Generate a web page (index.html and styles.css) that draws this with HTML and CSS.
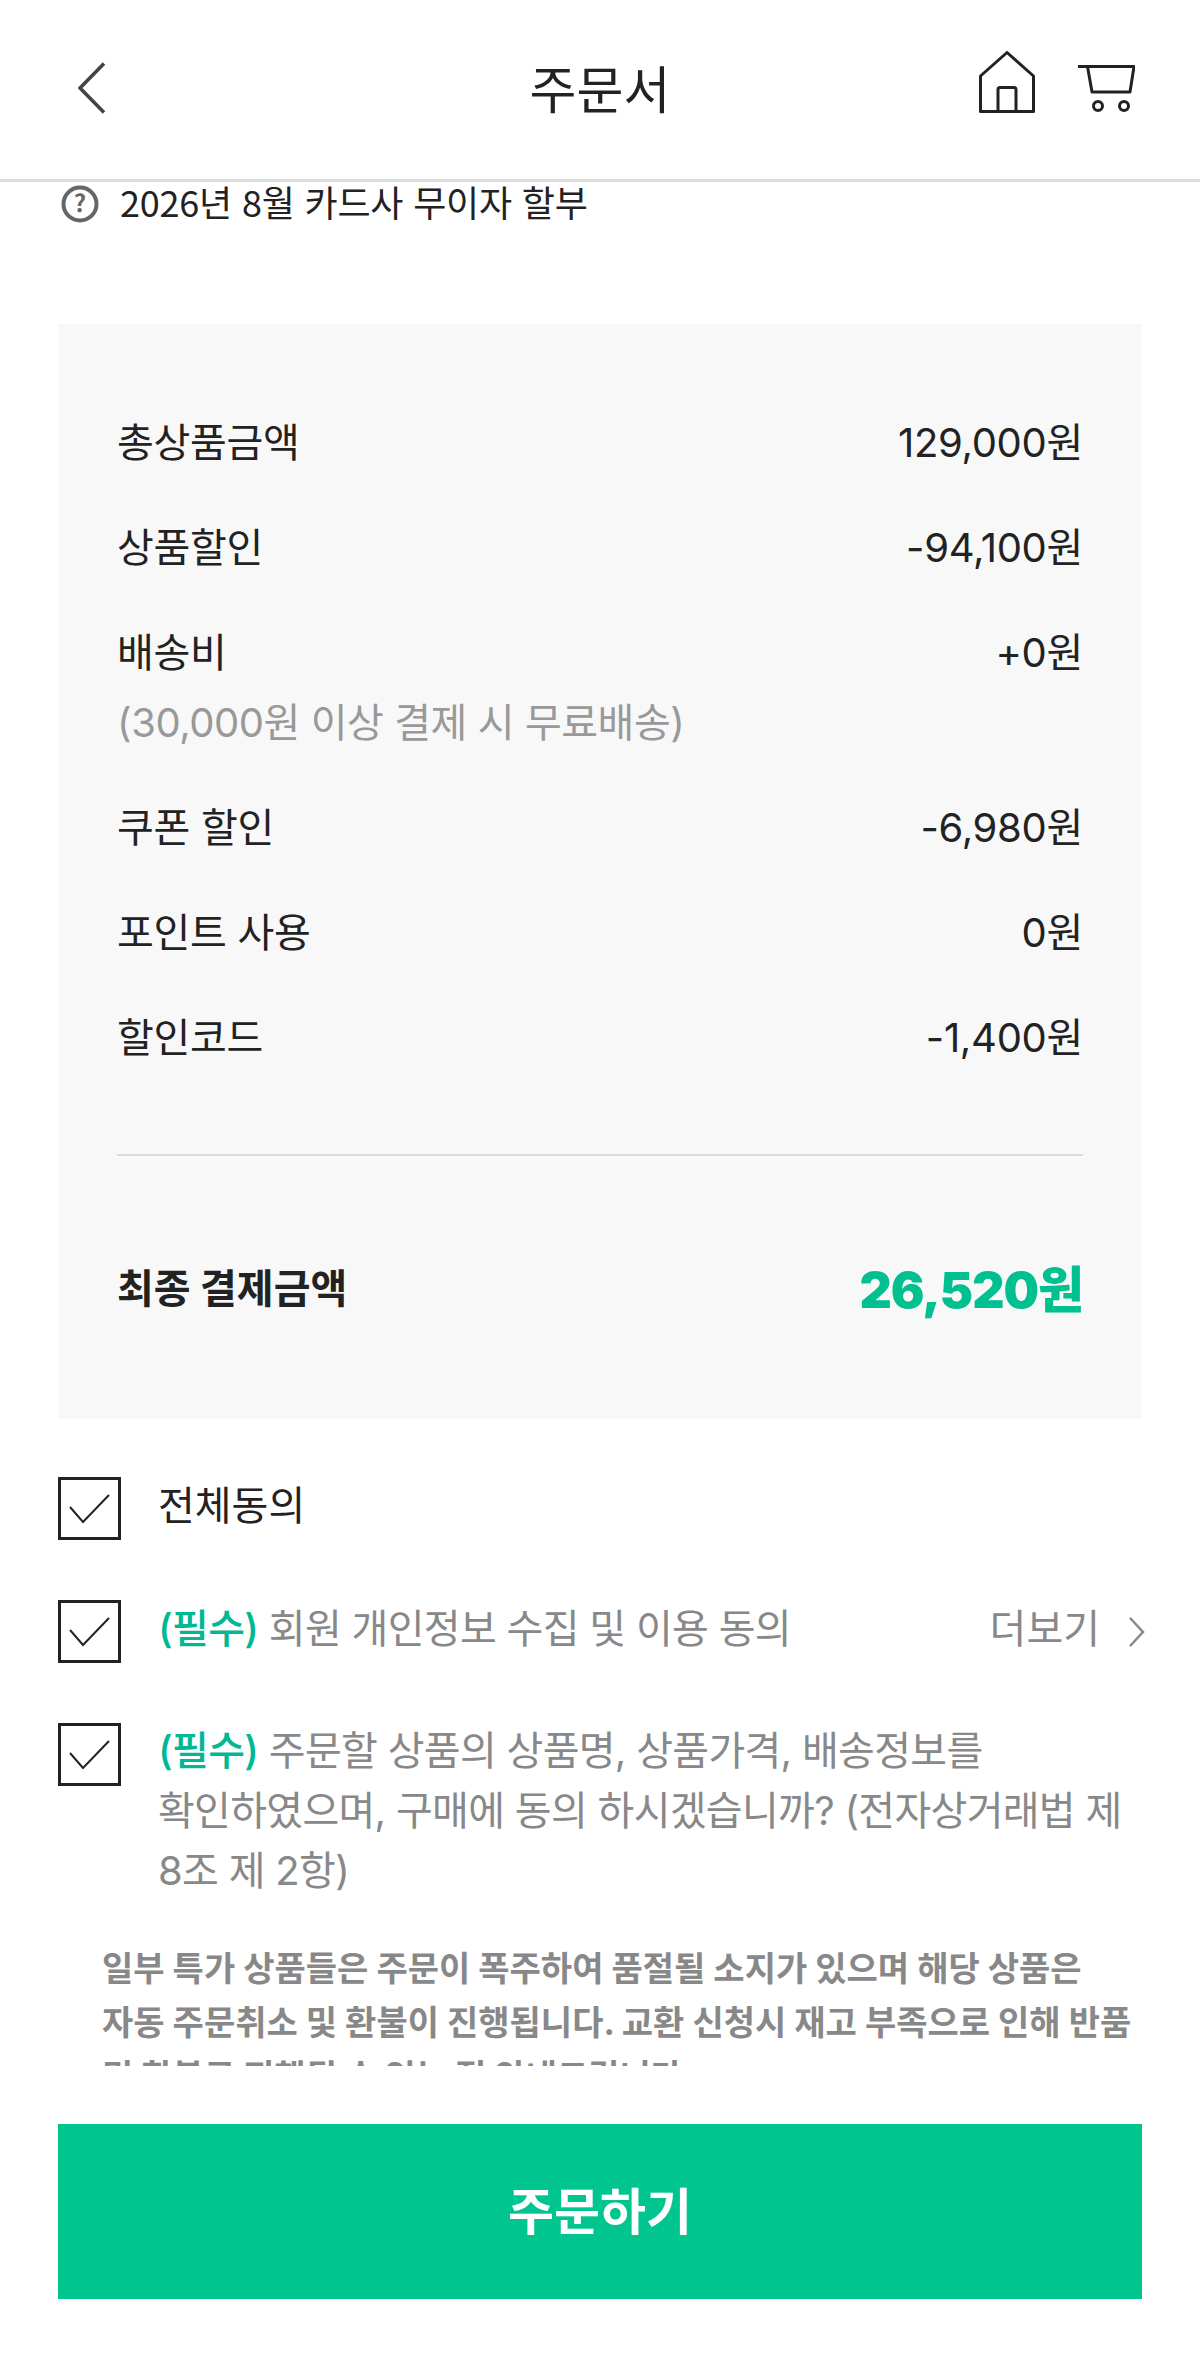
FILE: index.html
```html
<!DOCTYPE html>
<html lang="ko">
<head>
    <meta charset="UTF-8">
    <meta name="viewport" content="width=device-width, initial-scale=1.0">
    <title>주문서</title>
    <link rel="stylesheet" href="styles.css">
</head>
<body>
    <div class="page">
        <header class="header">
            <a class="back" href="#">
                <svg width="28" height="52" viewBox="0 0 28 52"><path d="M26 1.5 2 26l24 24.5" fill="none" stroke="#444" stroke-width="3.500"/></svg>
            </a>
            <h1 class="title">주문서</h1>
            <div class="header-icons">
                <svg width="56" height="62" viewBox="0 0 56 62"><path d="M1.5 60.5V25L28 1.5 54.5 25v35.5zM19 60.5V38.5q0-2 2-2h14q2 0 2 2v22" fill="none" stroke="#222" stroke-width="3" stroke-linejoin="round"/></svg>
                <svg width="57" height="49" viewBox="0 0 57 49"><path d="M0 2.5h56L52 28H14L9.500 2.500" fill="none" stroke="#222" stroke-width="3" stroke-linejoin="round"/><circle cx="20" cy="42" r="4.500" fill="none" stroke="#222" stroke-width="3"/><circle cx="46" cy="42" r="4.500" fill="none" stroke="#222" stroke-width="3"/></svg>
            </div>
        </header>

        <main class="content">
            <div class="info">
                <svg width="38" height="38" viewBox="0 0 38 38"><circle cx="19" cy="19" r="16.500" fill="none" stroke="#666" stroke-width="4"/><text x="19" y="27" text-anchor="middle" class="info-mark">?</text></svg>
                <span class="info-text">2026년 8월 카드사 무이자 할부</span>
            </div>

            <section class="summary">
                <div class="rows">
                    <div class="row"><span>총상품금액</span><span>129,000원</span></div>
                    <div class="row"><span>상품할인</span><span>-94,100원</span></div>
                    <div>
                        <div class="row"><span>배송비</span><span>+0원</span></div>
                        <p class="row-note">(30,000원 이상 결제 시 무료배송)</p>
                    </div>
                    <div class="row"><span>쿠폰 할인</span><span>-6,980원</span></div>
                    <div class="row"><span>포인트 사용</span><span>0원</span></div>
                    <div class="row"><span>할인코드</span><span>-1,400원</span></div>
                </div>
                <div class="total">
                    <span class="total-label">최종 결제금액</span>
                    <span class="total-price">26,520원</span>
                </div>
            </section>

            <section class="agree">
                <div class="agree-row">
                    <span class="check"><svg width="42" height="30" viewBox="0 0 42 30"><path d="M1 13l13 15L40 1" fill="none" stroke="#222" stroke-width="2"/></svg></span>
                    <span class="agree-all">전체동의</span>
                </div>
                <div class="agree-row">
                    <span class="check"><svg width="42" height="30" viewBox="0 0 42 30"><path d="M1 13l13 15L40 1" fill="none" stroke="#222" stroke-width="2"/></svg></span>
                    <span class="agree-text"><b>(필수)</b> 회원 개인정보 수집 및 이용 동의</span>
                    <a class="more" href="#"><span>더보기</span>
                        <svg width="18" height="30" viewBox="0 0 18 30"><path d="M2 1l13 14L2 29" fill="none" stroke="#888" stroke-width="2.500"/></svg>
                    </a>
                </div>
                <div class="agree-row agree-row-top">
                    <span class="check"><svg width="42" height="30" viewBox="0 0 42 30"><path d="M1 13l13 15L40 1" fill="none" stroke="#222" stroke-width="2"/></svg></span>
                    <span class="agree-text"><b>(필수)</b> 주문할 상품의 상품명, 상품가격, 배송정보를<br>확인하였으며, 구매에 동의 하시겠습니까? (전자상거래법 제<br>8조 제 2항)</span>
                </div>
            </section>

            <p class="notice">일부 특가 상품들은 주문이 폭주하여 품절될 소지가 있으며 해당 상품은<br>자동 주문취소 및 환불이 진행됩니다. 교환 신청시 재고 부족으로 인해 반품<br>및 환불로 진행될 수 있는 점 안내드립니다.</p>
        </main>

        <footer class="footer">
            <button type="button" class="order-btn"><span class="order-label">주문하기</span></button>
        </footer>
    </div>
</body>
</html>
```

FILE: styles.css
```css
* {
    box-sizing: border-box;
}
body {
    margin: 0;
    background-color: #fff;
    color: #222;
    font-family: Inter, "Noto Sans CJK KR", sans-serif;
    font-size: 40px;
}
.page {
    display: flex;
    flex-direction: column;
    width: 1200px;
    height: 2357px;
    overflow: hidden;
}
.header {
    display: grid;
    grid-template-columns: 1fr auto 1fr;
    align-items: center;
    flex: none;
    height: 182px;
    padding: 0 65px 3px;
    border-bottom: 3px solid #ddd;
}
.back {
    display: flex;
    margin-left: 13px;
}
.title {
    margin: 0 0 3px;
    font-family: "Noto Sans CJK KR", sans-serif;
    font-size: 51px;
    font-weight: 400;
    line-height: 60px;
}
.header-icons {
    display: flex;
    justify-content: flex-end;
    align-items: flex-end;
    gap: 43px;
    margin-bottom: 12px;
}
.content {
    flex: 1;
    min-height: 0;
    overflow: hidden;
}
.info {
    display: flex;
    align-items: center;
    gap: 21px;
    height: 44px;
    padding-left: 61px;
    font-family: "Noto Sans CJK KR", sans-serif;
    font-size: 36px;
}
.info-text {
    margin-bottom: 6px;
    letter-spacing: -0.2px;
    line-height: 38px;
}
.info-mark {
    fill: #666;
    font-size: 24px;
    font-weight: 700;
    font-family: "Noto Sans CJK KR", sans-serif;
}
.summary {
    margin: 98px 58px 0;
    padding: 89px 59px 93px;
    background-color: #f8f8f8;
}
.rows {
    display: flex;
    flex-direction: column;
    gap: 45px;
    padding-bottom: 86px;
    border-bottom: 2px solid #ddd;
}
.row {
    display: flex;
    justify-content: space-between;
    letter-spacing: -0.3px;
    line-height: 60px;
}
.row-note {
    margin: 10px 0 0;
    color: #999;
    letter-spacing: -0.45px;
    line-height: 60px;
}
.total {
    display: flex;
    justify-content: space-between;
    align-items: center;
    height: 80px;
    margin-top: 90px;
}
.total-label {
    font-size: 40px;
    font-weight: 700;
}
.total-price {
    color: #00c08f;
    font-size: 50px;
    font-weight: 900;
    letter-spacing: -1px;
}
.agree {
    display: flex;
    flex-direction: column;
    gap: 60px;
    margin: 58px 58px 0;
}
.agree-row {
    display: flex;
    align-items: center;
    gap: 37px;
    min-height: 63px;
    line-height: 58px;
}
.agree-row-top {
    align-items: flex-start;
    line-height: 60px;
}
.agree-row-top .agree-text {
    margin-top: -2px;
    padding-bottom: 0;
}
.check {
    display: flex;
    flex: none;
    justify-content: center;
    align-items: center;
    width: 63px;
    height: 63px;
    border: 3px solid #222;
}
.agree-all {
    padding-bottom: 5px;
    color: #222;
}
.agree-text {
    padding-bottom: 5px;
    color: #888;
    letter-spacing: -0.7px;
}
.agree-text b {
    color: #00b894;
    font-weight: 500;
}
.more {
    display: flex;
    align-items: center;
    gap: 28px;
    margin-left: auto;
    margin-right: -4px;
    color: #888;
    text-decoration: none;
}
.more span {
    padding-bottom: 5px;
}
.notice {
    margin: 41px 40px 0 102px;
    color: #888;
    font-size: 34px;
    font-weight: 700;
    line-height: 54px;
    white-space: nowrap;
}
.footer {
    flex: none;
    padding: 58px;
}
.order-btn {
    display: block;
    width: 100%;
    height: 175px;
    padding: 0;
    border: none;
    background-color: #00c58e;
    color: #fff;
    font-family: "Noto Sans CJK KR", sans-serif;
    font-size: 50px;
    font-weight: 700;
    cursor: pointer;
}
.order-label {
    display: block;
    padding-bottom: 8px;
}
```
